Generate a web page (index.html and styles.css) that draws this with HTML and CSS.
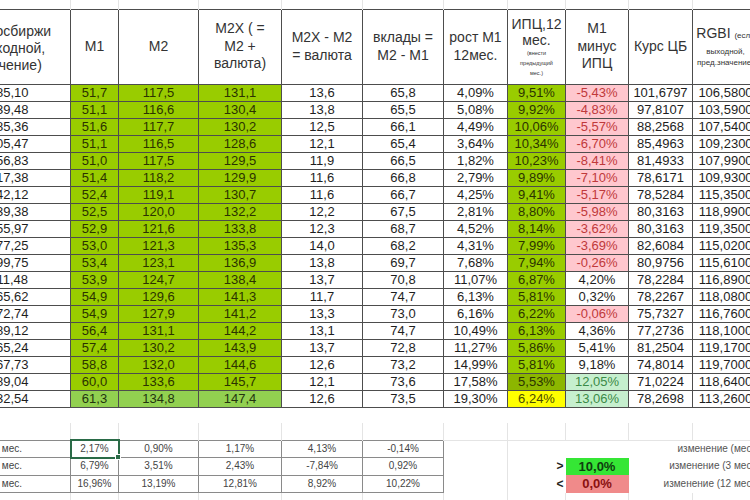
FILE: index.html
```html
<!DOCTYPE html>
<html lang="ru">
<head>
<meta charset="utf-8">
<title>Денежная масса</title>
<link rel="stylesheet" href="styles.css">
</head>
<body>
<table class="sheet">
<colgroup>
<col class="c0"><col class="c1"><col class="c2"><col class="c3"><col class="c4"><col class="c5"><col class="c6"><col class="c7"><col class="c8"><col class="c9"><col class="c10">
</colgroup>
<tbody>
<tr class="pad-top"><td></td><td></td><td></td><td></td><td></td><td></td><td></td><td></td><td></td><td></td><td></td></tr>
<tr class="head">
<td class="index"><span class="shift">Индекс Мосбиржи<br>(если выходной,<br>пред.значение)</span></td>
<td>М1</td>
<td>М2</td>
<td>М2Х ( =<br>М2 +<br>валюта)</td>
<td>М2Х - М2<br>= валюта</td>
<td>вклады =<br>М2 - М1</td>
<td>рост М1<br>12мес.</td>
<td class="cpi">ИПЦ,12<br>мес.<span class="tiny">(внести<br>предыдущий<br>мес.)</span></td>
<td>М1<br>минус<br>ИПЦ</td>
<td>Курс ЦБ</td>
<td>RGBI <span class="small-inline">(если</span><span class="small-block">выходной,<br>пред.значение)</span></td>
</tr>
<tr class="row"><td>1485,10</td><td class="g">51,7</td><td class="g">117,5</td><td class="g">131,1</td><td>13,6</td><td>65,8</td><td>4,09%</td><td class="g">9,51%</td><td class="neg">-5,43%</td><td>101,6797</td><td>106,5800</td></tr>
<tr class="row"><td>1439,48</td><td class="g">51,1</td><td class="g">116,6</td><td class="g">130,4</td><td>13,8</td><td>65,5</td><td>5,08%</td><td class="g">9,92%</td><td class="neg">-4,83%</td><td>97,8107</td><td>103,5900</td></tr>
<tr class="row"><td>1485,36</td><td class="g">51,6</td><td class="g">117,7</td><td class="g">130,2</td><td>12,5</td><td>66,1</td><td>4,49%</td><td class="g">10,06%</td><td class="neg">-5,57%</td><td>88,2568</td><td>107,5400</td></tr>
<tr class="row"><td>1505,47</td><td class="g">51,1</td><td class="g">116,5</td><td class="g">128,6</td><td>12,1</td><td>65,4</td><td>3,64%</td><td class="g">10,34%</td><td class="neg">-6,70%</td><td>85,4963</td><td>109,2300</td></tr>
<tr class="row"><td>1556,83</td><td class="g">51,0</td><td class="g">117,5</td><td class="g">129,5</td><td>11,9</td><td>66,5</td><td>1,82%</td><td class="g">10,23%</td><td class="neg">-8,41%</td><td>81,4933</td><td>107,9900</td></tr>
<tr class="row"><td>1617,38</td><td class="g">51,4</td><td class="g">118,2</td><td class="g">129,9</td><td>11,6</td><td>66,8</td><td>2,79%</td><td class="g">9,89%</td><td class="neg">-7,10%</td><td>78,6171</td><td>109,9300</td></tr>
<tr class="row"><td>1642,12</td><td class="g">52,4</td><td class="g">119,1</td><td class="g">130,7</td><td>11,6</td><td>66,7</td><td>4,25%</td><td class="g">9,41%</td><td class="neg">-5,17%</td><td>78,5284</td><td>115,3500</td></tr>
<tr class="row"><td>1639,38</td><td class="g">52,5</td><td class="g">120,0</td><td class="g">132,2</td><td>12,2</td><td>67,5</td><td>2,81%</td><td class="g">8,80%</td><td class="neg">-5,98%</td><td>80,3163</td><td>118,9900</td></tr>
<tr class="row"><td>1655,97</td><td class="g">52,9</td><td class="g">121,6</td><td class="g">133,8</td><td>12,3</td><td>68,7</td><td>4,52%</td><td class="g">8,14%</td><td class="neg">-3,62%</td><td>80,3163</td><td>119,3500</td></tr>
<tr class="row"><td>1677,25</td><td class="g">53,0</td><td class="g">121,3</td><td class="g">135,3</td><td>14,0</td><td>68,2</td><td>4,31%</td><td class="g">7,99%</td><td class="neg">-3,69%</td><td>82,6084</td><td>115,0200</td></tr>
<tr class="row"><td>1699,75</td><td class="g">53,4</td><td class="g">123,1</td><td class="g">136,9</td><td>13,8</td><td>69,7</td><td>7,68%</td><td class="g">7,94%</td><td class="neg">-0,26%</td><td>80,9756</td><td>115,6100</td></tr>
<tr class="row"><td>1711,48</td><td class="g">53,9</td><td class="g">124,7</td><td class="g">138,4</td><td>13,7</td><td>70,8</td><td>11,07%</td><td class="g">6,87%</td><td>4,20%</td><td>78,2284</td><td>116,8900</td></tr>
<tr class="row"><td>1765,62</td><td class="g">54,9</td><td class="g">129,6</td><td class="g">141,3</td><td>11,7</td><td>74,7</td><td>6,13%</td><td class="g">5,81%</td><td>0,32%</td><td>78,2267</td><td>118,0800</td></tr>
<tr class="row"><td>1772,74</td><td class="g">54,9</td><td class="g">127,9</td><td class="g">141,2</td><td>13,3</td><td>73,0</td><td>6,16%</td><td class="g">6,22%</td><td class="neg">-0,06%</td><td>75,7327</td><td>116,7600</td></tr>
<tr class="row"><td>1789,12</td><td class="g">56,4</td><td class="g">131,1</td><td class="g">144,2</td><td>13,1</td><td>74,7</td><td>10,49%</td><td class="g">6,13%</td><td>4,36%</td><td>77,2736</td><td>118,1000</td></tr>
<tr class="row"><td>1865,24</td><td class="g">57,4</td><td class="g">130,2</td><td class="g">143,9</td><td>13,7</td><td>72,8</td><td>11,27%</td><td class="g">5,86%</td><td>5,41%</td><td>81,2504</td><td>119,1700</td></tr>
<tr class="row"><td>1867,73</td><td class="g">58,8</td><td class="g">132,0</td><td class="g">144,6</td><td>12,6</td><td>73,2</td><td>14,99%</td><td class="g">5,81%</td><td>9,18%</td><td>74,8014</td><td>119,7000</td></tr>
<tr class="row"><td>1889,04</td><td class="g">60,0</td><td class="g">133,6</td><td class="g">145,7</td><td>12,1</td><td>73,6</td><td>17,58%</td><td class="gd">5,53%</td><td class="pos">12,05%</td><td>71,0224</td><td>118,6400</td></tr>
<tr class="row"><td>1832,54</td><td class="g2">61,3</td><td class="g2">134,8</td><td class="g2">147,4</td><td>12,6</td><td>73,5</td><td>19,30%</td><td class="y">6,24%</td><td class="pos">13,06%</td><td>78,2698</td><td>113,2600</td></tr>
<tr class="blank"><td></td><td></td><td></td><td></td><td></td><td></td><td></td><td></td><td></td><td></td><td></td></tr>
<tr class="blank grid"><td></td><td></td><td></td><td></td><td></td><td></td><td></td><td></td><td></td><td></td><td></td></tr>
<tr class="foot first">
<td class="lbl">за 1 мес.</td><td class="sel">2,17%</td><td>0,90%</td><td>1,17%</td><td>4,13%</td><td>-0,14%</td>
<td class="free edge"></td><td class="free"></td><td class="free"></td><td class="note" colspan="2">изменение (мес.)</td>
</tr>
<tr class="foot">
<td class="lbl">за 3 мес.</td><td>6,79%</td><td>3,51%</td><td>2,43%</td><td>-7,84%</td><td>0,92%</td>
<td class="free edge"></td><td class="free sign">&gt;</td><td class="hi">10,0%</td><td class="note" colspan="2">изменение (3 мес.)</td>
</tr>
<tr class="foot">
<td class="lbl">за 12 мес.</td><td>16,96%</td><td>13,19%</td><td>12,81%</td><td>8,92%</td><td>10,22%</td>
<td class="free edge"></td><td class="free sign">&lt;</td><td class="lo">0,0%</td><td class="note" colspan="2">изменение (12 мес.)</td>
</tr>
<tr class="pad-bottom"><td></td><td></td><td></td><td></td><td></td><td></td><td></td><td></td><td></td><td></td><td></td></tr>
</tbody>
</table>
</body>
</html>
```

FILE: styles.css
```css
html, body {
  margin: 0;
  padding: 0;
  background: #fff;
}

body {
  width: 750px;
  height: 500px;
  overflow: hidden;
  font-family: "Liberation Sans", Arial, sans-serif;
  color: #222;
}

.sheet {
  border-collapse: collapse;
  table-layout: fixed;
  width: 819px;
  margin-left: -61px;
}

.c0 { width: 131px; }
.c1 { width: 48px; }
.c2 { width: 80px; }
.c3 { width: 83px; }
.c4 { width: 81px; }
.c5 { width: 81px; }
.c6 { width: 64px; }
.c7 { width: 58px; }
.c8 { width: 63px; }
.c9 { width: 64px; }
.c10 { width: 66px; }

.sheet td {
  padding: 0;
  text-align: center;
  vertical-align: middle;
  white-space: nowrap;
  border: 1px solid #e4e4e4;
}

.pad-top { height: 9px; }
.pad-top td { border-top: none; border-bottom: none; }

.head { height: 75px; }
.head td {
  border-color: #4d4d4d;
  font-size: 14px;
  line-height: 17.5px;
  color: #333;
}
.head .index {
  padding-top: 4px;
  line-height: 17px;
}
.head .index .shift {
  display: block;
  margin-left: -26px;
}
.head .cpi { line-height: 16px; }

.tiny {
  display: block;
  font-size: 5.5px;
  line-height: 10px;
}

.small-inline { font-size: 8px; }

.small-block {
  display: block;
  font-size: 8px;
  line-height: 11px;
  margin-top: 2px;
}

.row { height: 17px; }
.row td {
  border-color: #4d4d4d;
  font-size: 13px;
  line-height: 15px;
  color: #1e1e1e;
}

.row .g { background: #99cc00; color: #2b3300; }
.row .g2 { background: #92d050; color: #23340f; }
.row .gd { background: #8cb600; color: #2b3300; }
.row .y { background: #ffff00; color: #4a4a00; }
.row .neg { background: #ffc7ce; color: #c0393b; }
.row .pos { background: #c6efce; color: #3b8a47; }

.blank { height: 16px; }
.blank td { border: none; }
.blank.grid { height: 17px; }
.blank.grid td {
  border-left: 1px solid #e4e4e4;
  border-right: 1px solid #e4e4e4;
}

.foot { height: 17.5px; }
.foot td {
  border-color: #8a8a8a;
  font-size: 10px;
  line-height: 12px;
  color: #444;
}

.foot .lbl {
  text-align: right;
  padding-right: 48px;
}

.foot .sel {
  position: relative;
  outline: 2px solid #2a6b47;
  outline-offset: -1px;
}
.foot .sel::after {
  content: "";
  position: absolute;
  right: -3px;
  bottom: -3px;
  width: 4px;
  height: 4px;
  background: #2a6b47;
  border: 1px solid #fff;
}

.foot .free {
  border-color: #e4e4e4;
  border-bottom: none;
  border-top: none;
}
.foot.first .free { border-top: 1px solid #e4e4e4; }
.foot .free:not(.edge) { border-right: none; border-left: none; }
.foot .edge { border-left: 1px solid #8a8a8a; }

.foot .sign {
  text-align: right;
  padding-right: 2px;
  font-size: 12px;
  font-weight: bold;
  color: #222;
}

.foot .hi,
.foot .lo {
  border: none;
  font-size: 13px;
  font-weight: bold;
  line-height: 15px;
}
.foot .hi { background: #35e635; color: #0f3d0f; }
.foot .lo { background: #f08a8a; color: #8a1010; }

.foot .note {
  border: none;
  text-align: right;
  padding-right: 1px;
  color: #555;
}
.foot.first .note { border-top: 1px solid #e4e4e4; }

.pad-bottom td { border-top: none; border-bottom: none; height: 10px; }
```
